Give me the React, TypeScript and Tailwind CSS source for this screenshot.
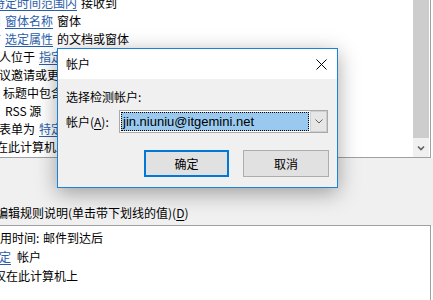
const linkCls = "text-[#2a5ea8] underline underline-offset-2";

// rows of the condition list; most of them run on under the dialog
const ruleLines = [
    { cls: "-ml-[7px]", link: "特定时间范围内", pre: "", post: "接收到" },
    { cls: "-ml-[11px]", link: "窗体名称", pre: "用", post: "窗体" },
    { cls: "-ml-[11px]", link: "选定属性", pre: "有", post: "的文档或窗体" },
    { cls: "-ml-[13px]", link: "指定", pre: "件人位于", post: "" },
    { cls: "-ml-[13px]", link: "", pre: "会议邀请或更新", post: "" },
    { cls: "ml-[3px]", link: "", pre: "标题中包含", post: "" },
    { cls: "ml-[5px]", link: "", pre: "RSS 源", post: "" },
    { cls: "-ml-[1px]", link: "特定", pre: "表单为", post: "" },
    { cls: "-ml-[4px]", link: "", pre: "在此计算机上", post: "" }
];

const App = () => {
    return (
        <div
            className="relative w-[433px] h-[300px] overflow-hidden bg-[#f0f0f0] text-[12px] text-black"
            style={{ fontFamily: "'Noto Sans CJK SC', 'Liberation Sans', sans-serif" }}
        >
            {/* top condition list */}
            <div className="flex h-[158px] w-[433px]">
                <div className="flex w-[431px] bg-white border-r border-b border-[#a0a0a0]">
                    <div className="w-[413px] overflow-hidden">
                        <div className="-mt-[6px]">
                            {ruleLines.map((line, index) => (
                                <div
                                    key={index}
                                    className={`h-[18px] leading-[18px] whitespace-nowrap ${line.cls}`}
                                >
                                    {line.pre && <span className="mr-[4px]">{line.pre}</span>}
                                    {line.link && <span className={`${linkCls} mr-[4px]`}>{line.link}</span>}
                                    {line.post && <span>{line.post}</span>}
                                </div>
                            ))}
                        </div>
                    </div>
                    <div className="flex w-[16px] flex-col">
                        <div className="h-[138px] bg-[#cdcdcd]" />
                        <div className="flex flex-1 items-center justify-center bg-[#f0f0f0]">
                            <svg width="8" height="6" viewBox="0 0 8 6">
                                <path d="M1 1.5 L4 4.5 L7 1.5" fill="none" stroke="#606060" strokeWidth="1.6" />
                            </svg>
                        </div>
                    </div>
                    <div className="w-[1px] bg-white" />
                </div>
                <div className="w-[2px] bg-white" />
            </div>

            {/* description label */}
            <div className="h-[67px] pt-[46px]">
                <div className="-ml-[4px] h-[18px] leading-[18px] whitespace-nowrap">
                    编辑规则说明(单击带下划线的值)(<span className="underline underline-offset-2">D</span>)
                </div>
            </div>

            {/* description box */}
            <div className="flex h-[75px] w-[433px]">
                <div className="w-[431px] bg-white border-t border-r border-[#a0a0a0] pt-[2px]">
                    <div className="-ml-[12px] h-[19px] leading-[19px] whitespace-nowrap">
                        应用时间: <span className="ml-[1px]">邮件到达后</span>
                    </div>
                    <div className="-ml-[13px] h-[19px] leading-[19px] whitespace-nowrap">
                        <span className={linkCls}>指定</span>
                        <span className="ml-[6px]">帐户</span>
                    </div>
                    <div className="-ml-[6px] h-[19px] leading-[19px] whitespace-nowrap">仅在此计算机上</div>
                </div>
                <div className="mt-[1px] w-[2px] bg-white" />
            </div>

            {/* account dialog */}
            <div className="absolute left-[57px] top-[48px] flex h-[140px] w-[281px] flex-col border border-[#1883d7] bg-[#f0f0f0] shadow-[0_5px_20px_rgba(0,0,0,0.35)]">
                <div className="flex h-[30px] items-center justify-between bg-white pl-[8px] pr-[10px]">
                    <span className="leading-[18px]">帐户</span>
                    <svg width="11" height="11" viewBox="0 0 11 11">
                        <path d="M0.5 0.5 L10.5 10.5 M10.5 0.5 L0.5 10.5" stroke="#000" strokeWidth="1" />
                    </svg>
                </div>
                <div className="flex-1 px-[8px] pt-[9px]">
                    <div className="h-[18px] leading-[18px]">选择检测帐户:</div>
                    <div className="mt-[4px] flex items-center">
                        <div className="w-[53px] leading-[18px]">
                            帐户(<span className="underline underline-offset-2">A</span>):
                        </div>
                        <div className="flex h-[23px] w-[209px] border border-[#a9a9a9] bg-white">
                            <div className="ml-[1px] my-[1px] flex w-[188px] items-center border border-dotted border-black bg-[#99c9ef] pl-[1px]">
                                <span
                                    className="text-[13px] leading-[17px] whitespace-nowrap"
                                    style={{ fontFamily: "'Liberation Sans', sans-serif" }}
                                >
                                    jin.niuniu@itgemini.net
                                </span>
                            </div>
                            <div className="ml-[1px] flex w-[17px] items-center justify-center border border-[#cfcfcf] bg-[#e6e6e6]">
                                <svg width="8" height="5" viewBox="0 0 8 5">
                                    <path d="M0.5 0.5 L4 4 L7.5 0.5" fill="none" stroke="#606060" strokeWidth="1" />
                                </svg>
                            </div>
                        </div>
                    </div>
                    <div className="mt-[17px] flex justify-end gap-[14px]">
                        <div className="flex h-[27px] w-[85px] items-center justify-center border-2 border-[#0078d7] bg-[#e1e1e1]">
                            确定
                        </div>
                        <div className="flex h-[27px] w-[86px] items-center justify-center border border-[#adadad] bg-[#e1e1e1]">
                            取消
                        </div>
                    </div>
                </div>
            </div>
        </div>
    );
};

export default App;
